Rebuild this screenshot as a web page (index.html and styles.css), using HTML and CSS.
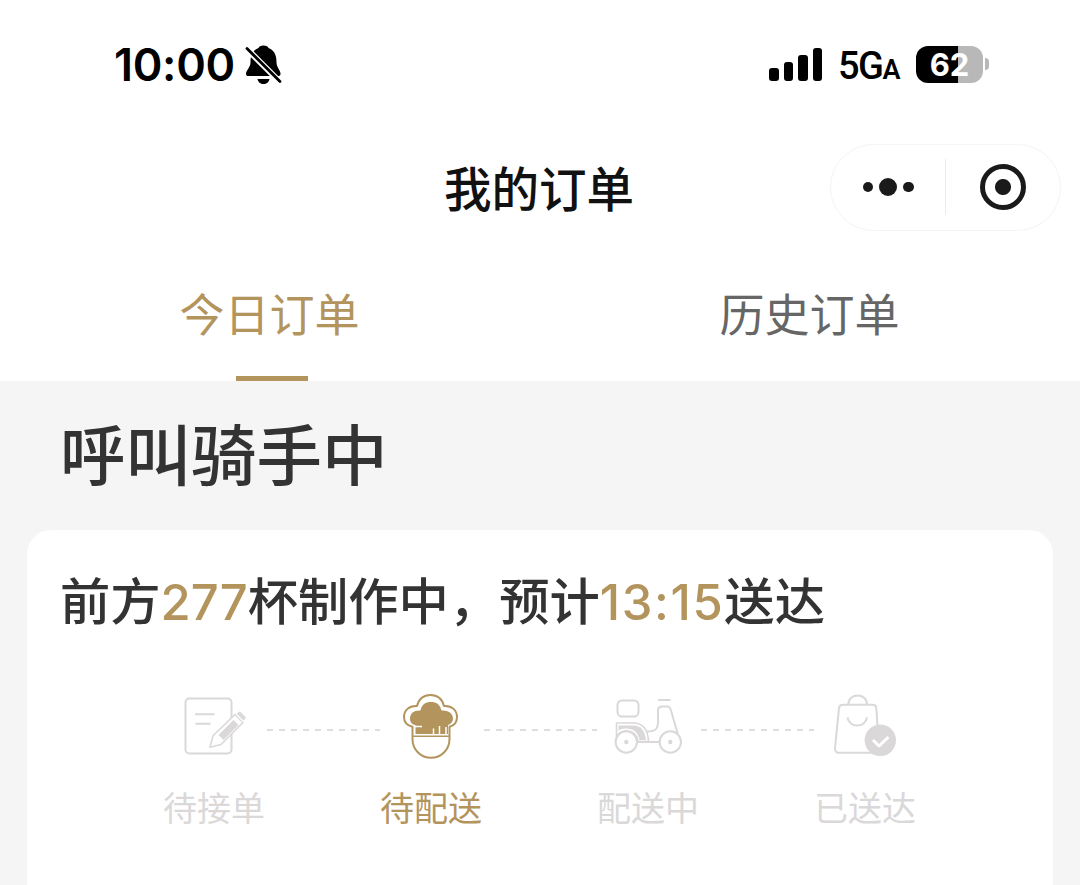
FILE: index.html
```html
<!DOCTYPE html>
<html lang="zh-CN">
<head>
  <meta charset="UTF-8" />
  <meta name="viewport" content="width=device-width, initial-scale=1" />
  <title>我的订单</title>
  <link rel="stylesheet" href="styles.css">
</head>
<body>

<div class="status-bar">
  <span class="time">10:00</span>
  <svg class="mute" width="40" height="42" viewBox="0 0 40 42">
    <path d="M20.500 2.500c-3 0-4.500 1-5 2.500C9 7.500 7.500 13 7.500 19.500c0 5-4.500 7.500-4.500 11.500 0 1.500 1 2 2.500 2H35c1.500 0 2.500-.5 2.500-2 0-4-4-6.500-4-11.500C33.500 13 32 7.500 25.500 5c-.5-1.500-2-2.500-5-2.500z"/>
    <path d="M14.500 36h12c-.5 3-3 5-6 5s-5.500-2-6-5z"/>
    <path d="M2 4l35 35" stroke="#fff" stroke-width="6"/>
    <path d="M4 5.500l33 33" stroke="#000" stroke-width="2.800" stroke-linecap="round"/>
  </svg>
  <div class="signal"><i></i><i></i><i></i><i></i></div>
  <span class="network">5G<small>A</small></span>
  <div class="battery">62</div>
  <div class="battery-tip"></div>
</div>

<div class="nav-bar">
  <h1>我的订单</h1>
  <div class="capsule">
    <div class="capsule-btn dots"><i></i><i class="big"></i><i></i></div>
    <div class="capsule-btn"><div class="target"></div></div>
  </div>
</div>

<div class="tabs">
  <div class="tab active">今日订单</div>
  <div class="tab">历史订单</div>
</div>

<div class="content">
  <h2>呼叫骑手中</h2>

  <div class="card">
    <p class="eta">前方<b class="cups">277</b>杯制作中，预计<b class="clock">13:15</b>送达</p>

    <div class="steps">
      <div class="step">
        <svg width="103" height="70" viewBox="0 0 103 70">
          <rect x="22.500" y="8.500" width="46" height="55" rx="4"/>
          <path d="M32 24.300h19.500M32.500 33.700h15"/>
          <path d="M47 57.300l3-11.500L72 24.500l8 8L58 54.500z" fill="#fff" stroke-width="1.600"/>
          <path d="M55.500 45L70.500 30l5 5L60.500 50z" class="fill"/>
          <path d="M72.500 25l3-3q1-1 2 0l4.800 4.800q1 1 0 2l-3 3z" class="fill"/>
          <path d="M73.500 24.500l7 7" stroke="#fff" stroke-width="1.200"/>
        </svg>
        <span>待接单</span>
      </div>
      <div class="line"></div>
      <div class="step active">
        <svg width="103" height="70" viewBox="0 0 103 70">
          <path d="M32.500 36.700C26.500 35.500 24 31.500 24 27c0-6.500 5-11.500 13-11C39 8.500 44 5 50.500 5S62 8.500 64 16c8-.5 13 4.500 13 11 0 4.500-2.500 8.500-7.500 9.700V49c0 11-8.500 18.800-18.500 18.800S32.500 60 32.500 49z"/>
          <path d="M35.500 44V35c-4-.5-5.500-3.500-5.500-6.500 0-5.500 4.500-8.500 10.500-8C41.500 14.500 45.500 12 51 12s9 2.500 10.500 8.500c6-.5 11.500 2.500 11.500 8 0 3-2 5.500-5 6.500v9z" class="fill"/>
          <path d="M33 46.300h36" stroke-width="1.500"/>
          <path d="M34 36.500h8M53.500 44v-5.500M59.500 44v-8M66 44v-7" stroke="#fff" stroke-width="1.500"/>
        </svg>
        <span>待配送</span>
      </div>
      <div class="line"></div>
      <div class="step">
        <svg width="103" height="70" viewBox="0 0 103 70">
          <rect x="20.500" y="10.500" width="21" height="16" rx="4.500"/>
          <path d="M19.500 47V33H36c10 0 15 7 15.500 18.500H41C40 44.500 36 41 29.500 41c-5 0-8 2-10 6z" fill="#fff" stroke-width="1.600"/>
          <path d="M21.500 40.500V35.500H36c8 0 12 5 13 14.500h-6.500C41 42 36 38.500 29.500 38.500c-3 0-5.500.5-8 2z" class="fill"/>
          <circle cx="29.300" cy="52" r="10.700" fill="#fff"/>
          <circle cx="73.300" cy="52" r="10.700"/>
          <path d="M61 10h12.500M41 52h21.500M50 41.500c9 0 11-3 11-10V20.500q0-4 4-4h5q3 0 4 4L80.500 43"/>
          <circle cx="29.300" cy="52" r="2.200" class="fill"/>
          <circle cx="73.300" cy="52" r="2.200" class="fill"/>
        </svg>
        <span>配送中</span>
      </div>
      <div class="line"></div>
      <div class="step">
        <svg width="103" height="70" viewBox="0 0 103 70">
          <path d="M29 14.700h29.500q3.500 0 3.800 3.500L65 58q.3 4.700-4 4.700H25q-4.300 0-4-4.700l4-39.800q.4-3.500 4-3.500z"/>
          <path d="M34.300 14.500c0-12 18.700-12 18.700 0M33.500 27.300c1.500 11 18 11 19.500 0"/>
          <circle cx="66.300" cy="50.300" r="15.700" class="fill"/>
          <path d="M59 50l6 6 9.500-9" stroke="#fff" stroke-width="3"/>
        </svg>
        <span>已送达</span>
      </div>
    </div>
  </div>
</div>

</body>
</html>
```
FILE: styles.css
```css
* {
  box-sizing: border-box;
}
body {
  margin: 0;
  height: 885px;
  overflow: hidden;
  background: #fff;
  color: #333;
  font-family: Inter, "Noto Sans CJK SC", sans-serif;
}
h1, h2, p {
  margin: 0;
}

/* status bar */
.status-bar {
  height: 130px;
  padding: 0 91px 2px 114px;
  display: flex;
  align-items: center;
  color: #000;
}
.time {
  width: 129px;
  font-size: 45px;
  font-weight: 600;
  letter-spacing: -0.3px;
  white-space: nowrap;
}
.signal {
  margin-left: auto;
  display: flex;
  align-items: flex-end;
  gap: 5px;
  height: 34px;
}
.signal i {
  width: 9.5px;
  height: 13px;
  border-radius: 3px;
  background: #000;
}
.signal i:nth-child(2) {
  height: 19px;
}
.signal i:nth-child(3) {
  height: 26px;
}
.signal i:nth-child(4) {
  height: 33px;
}
.network {
  width: 62px;
  margin: 4px 15px 0 16px;
  padding-right: 1px;
  font-family: Roboto, sans-serif;
  font-size: 38px;
  font-weight: 500;
  letter-spacing: -1.5px;
  white-space: nowrap;
}
.network small {
  font-size: 27px;
  font-weight: 600;
}
.battery {
  width: 67px;
  height: 37px;
  margin-left: 1px;
  border-radius: 12px;
  background: linear-gradient(to right, #000 62%, #b8b8b8 62%);
  color: #fff;
  font-size: 31px;
  font-weight: 700;
  line-height: 37px;
  text-align: center;
}
.battery-tip {
  width: 4px;
  height: 12px;
  margin-left: 2px;
  border-radius: 0 4px 4px 0;
  background: #b8b8b8;
}

/* title and mini program buttons */
.nav-bar {
  height: 116px;
  display: grid;
  grid-template-columns: 1fr auto 1fr;
  align-items: center;
  padding: 0 19px 2px 0;
}
.nav-bar h1 {
  grid-column: 2;
  padding: 0 0 2px 17px;
  font-size: 47.5px;
  font-weight: 500;
  color: #111;
}
.capsule {
  justify-self: end;
  width: 231px;
  height: 87px;
  border: 1px solid #f4f4f4;
  border-radius: 44px;
  display: flex;
  align-items: center;
}
.capsule-btn {
  flex: 1;
  height: 56px;
  display: flex;
  align-items: center;
  justify-content: center;
}
.capsule-btn + .capsule-btn {
  border-left: 1px solid #ececec;
}
.dots {
  gap: 6px;
}
.dots i {
  width: 10.5px;
  height: 10.5px;
  border-radius: 50%;
  background: #1a1a1a;
}
.dots .big {
  width: 18px;
  height: 18px;
}
.target {
  width: 46px;
  height: 46px;
  border: 5px solid #1a1a1a;
  border-radius: 50%;
  background: radial-gradient(circle, #1a1a1a 7.5px, transparent 8.5px);
}

/* tabs */
.tabs {
  height: 135px;
  display: flex;
}
.tab {
  flex: 1;
  display: flex;
  flex-direction: column;
  align-items: center;
  justify-content: space-between;
  padding: 37px 1px 0 0;
  font-size: 45px;
  line-height: 66px;
  color: #666;
}
.tab.active {
  color: #b3945c;
}
.tab.active::after {
  content: "";
  width: 72px;
  height: 5px;
  margin-left: 4px;
  background: #b3945c;
}

/* order */
.content {
  height: 504px;
  padding: 0 27px;
  overflow: hidden;
  background: #f5f5f5;
}
.content h2 {
  height: 149px;
  padding-left: 33px;
  font-size: 65.5px;
  font-weight: 500;
  line-height: 151px;
}
.card {
  height: 380px;
  border-radius: 24px;
  background: #fff;
}
.eta {
  padding: 37px 0 0 33px;
  font-size: 50.3px;
  font-weight: 500;
  line-height: 70px;
  white-space: nowrap;
}
.eta b {
  font-size: 49px;
  font-weight: 500;
  color: #b3945c;
}
.eta .clock {
  letter-spacing: 1.6px;
}
.steps {
  margin-top: 52px;
  padding-left: 136px;
  display: flex;
}
.step {
  width: 103px;
  color: #dad8d8;
  text-align: center;
}
.step.active {
  color: #b3945c;
}
.step svg {
  display: block;
  fill: none;
  stroke: currentColor;
  stroke-width: 2;
  stroke-linejoin: round;
}
.step .fill {
  fill: currentColor;
  stroke: none;
}
.step span {
  display: block;
  margin: 24px 2px 0 0;
  font-size: 34px;
  line-height: 50px;
  white-space: nowrap;
}
.line {
  width: 114px;
  height: 2px;
  margin-top: 39px;
  background: repeating-linear-gradient(to right, transparent 0 1px, #dedede 1px 7px, transparent 7px 12px);
}
```
